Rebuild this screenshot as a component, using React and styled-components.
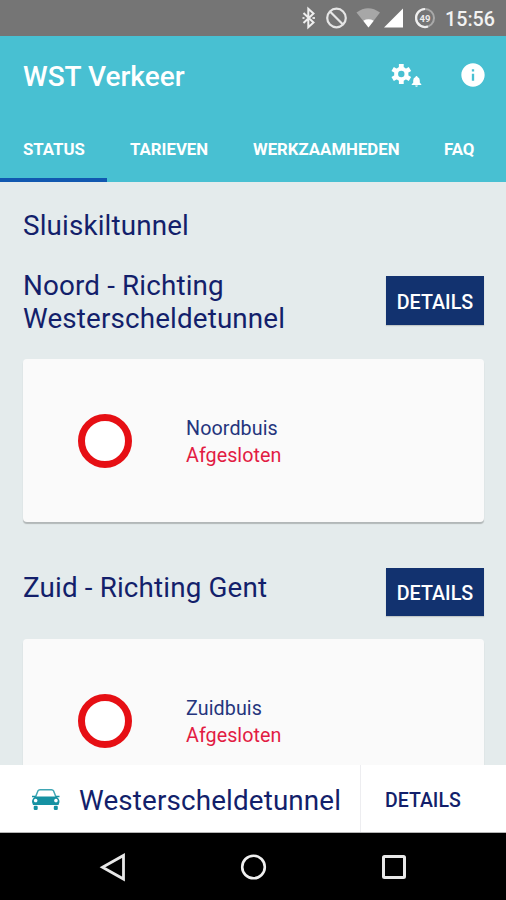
import React from "react";
import styled, { createGlobalStyle } from "styled-components";
import { MdInfo } from "react-icons/md";

const GlobalStyle = createGlobalStyle`
  *, *::before, *::after { box-sizing: border-box; }
  body { margin: 0; background: #e4ebec; font-family: Roboto, sans-serif; }
  button { font: inherit; border: 0; padding: 0; background: none; color: inherit; }
`;

const Screen = styled.div`
  width: 506px;
  height: 900px;
  display: flex;
  flex-direction: column;
  overflow: hidden;
  background: #e4ebec;
  color: #131f6b;
`;

const StatusBar = styled.div`
  flex: 0 0 36px;
  height: 36px;
  display: flex;
  align-items: center;
  justify-content: flex-end;
  padding-right: 11px;
  background: #757575;
  color: #fff;
`;

const StatusIcons = styled.svg`
  width: 136px;
  height: 36px;
  flex: none;
`;

const Clock = styled.span`
  width: 50px;
  margin-left: 9px;
  font-size: 19.7px;
  font-weight: 500;
  line-height: 34px;
  padding-top: 3px;
  white-space: nowrap;
  color: #f2f2f2;
`;

const AppBar = styled.header`
  flex: 0 0 146px;
  height: 146px;
  display: flex;
  flex-direction: column;
  background: #48c0d2;
  color: #fff;
`;

const Toolbar = styled.div`
  height: 80px;
  display: flex;
  align-items: center;
  padding: 0 19px 0 23px;
`;

const AppTitle = styled.h1`
  flex: 1;
  margin: 0;
  padding-top: 1px;
  font-size: 28px;
  font-weight: 500;
  line-height: 36px;
`;

const SettingsButton = styled.button`
  display: flex;
  margin-right: 37px;
`;

const SettingsIcon = styled.svg`
  width: 34px;
  height: 28px;
`;

const InfoButton = styled.button`
  display: flex;
  margin-top: -2px;
`;

const Tabs = styled.nav`
  height: 66px;
  display: flex;
`;

const Tab = styled.button`
  flex: none;
  width: ${(p) => p.$width}px;
  text-align: left;
  padding: 4px 0 0 23px;
  font-size: 16.8px;
  font-weight: 700;
  white-space: nowrap;
  border-bottom: 4px solid ${(p) => (p.$active ? "#1158b0" : "transparent")};
`;

const Content = styled.main`
  flex: 1;
  min-height: 0;
  overflow: hidden;
  padding: 27px 22px 0 23px;
`;

const Heading = styled.h2`
  margin: ${(p) => p.$offset || 0}px 0 0;
  font-size: 27.8px;
  font-weight: 400;
  line-height: 33px;
  letter-spacing: 0.15px;
  white-space: nowrap;
`;

const Direction = styled.div`
  display: flex;
  justify-content: space-between;
  align-items: flex-start;
  height: ${(p) => p.$height}px;
  margin: ${(p) => p.$top}px 0 ${(p) => p.$bottom}px;
`;

const DetailsButton = styled.button`
  width: 98px;
  height: ${(p) => p.$height || 49}px;
  margin-top: ${(p) => p.$offset || 0}px;
  background: #12326f;
  color: #fff;
  font-size: 19.7px;
  font-weight: 500;
  padding-top: 3px;
  box-shadow: 0 1px 1px rgba(0, 0, 0, 0.15);
`;

const Card = styled.section`
  height: 163px;
  display: flex;
  align-items: center;
  border-radius: 4px;
  background: #fafafa;
  box-shadow: 0 2px 1px rgba(0, 0, 0, 0.22);
`;

const ClosedSign = styled.div`
  width: 54px;
  height: 54px;
  margin: 1px 54px 0 55px;
  border: 7px solid #e60f14;
  border-radius: 50%;
  background: #fff;
`;

const TubeText = styled.div`
  font-size: 19.7px;
  line-height: 27px;
  padding-top: 3px;
`;

const TubeName = styled.div`
  color: #25357d;
  letter-spacing: 0.1px;
`;

const TubeState = styled.div`
  color: #e21c43;
  letter-spacing: 0.05px;
`;

const BottomBar = styled.footer`
  flex: 0 0 68px;
  display: flex;
  background: #fff;
  border-bottom: 1px solid #b5b5b5;
`;

const BottomLabel = styled.div`
  width: 361px;
  display: flex;
  align-items: center;
  padding: 3px 0 0 31px;
  border-right: 1px solid #ededf0;
`;

const CarIcon = styled.svg`
  width: 30px;
  height: 24px;
  margin: -3px 18px 0 0;
`;

const BottomAction = styled.button`
  padding: 3px 0 0 24px;
  font-size: 19.5px;
  font-weight: 500;
`;

const NavBar = styled.div`
  flex: 0 0 67px;
  background: #000;
  display: flex;
  align-items: center;
  padding-left: 97px;
  gap: 108px;
  svg { width: 32px; height: 32px; flex: none; }
`;

function StatusDrawing() {
  return (
    <StatusIcons viewBox="300 0 136 36" fill="none">
      <path d="M303.500 13l10 9.500-5.200 4.800V8.700l5.200 4.800-10 9.500" stroke="#efefef" strokeWidth="2" />
      <path d="M302.500 18h2M312.500 18h2.500" stroke="#dedede" strokeWidth="2" />
      <circle cx="336.500" cy="18" r="9.300" stroke="#e6e6e6" strokeWidth="2.200" />
      <path d="M330 11.500l13 13" stroke="#e6e6e6" strokeWidth="2.200" />
      <path d="M356.500 12.500Q368 4 380 12.500L368.500 27.500z" fill="#a7a7a7" />
      <path d="M363.300 20.700Q368.500 18 373.700 20.700L368.500 27.500z" fill="#fff" />
      <path d="M403 8.500V27.500H384z" fill="#fff" />
      <circle cx="425" cy="18" r="9" stroke="#a9a9a9" strokeWidth="2" />
      <path d="M425 9A9 9 0 1 0 428 26.500" stroke="#efefef" strokeWidth="2.200" />
      <text x="425" y="21.500" textAnchor="middle" fontSize="9.500" fontWeight="700" fill="#ededed">49</text>
    </StatusIcons>
  );
}

function GearWithBell() {
  return (
    <SettingsIcon viewBox="0 0 34 28">
      <g transform="translate(1.3 0)" fill="none" stroke="currentColor">
        <circle cx="12" cy="12" r="5.200" strokeWidth="4" />
        <path
          d="M12 2V7M12 17V22M3.340 7L7.700 9.500M16.300 14.500L20.660 17M3.340 17L7.700 14.500M16.300 9.500L20.660 7"
          strokeWidth="4.800"
        />
      </g>
      <path
        d="M28.500 14q1 0 1 1.100 2.300.8 2.300 3.500v2.200l1.500 1.500v.7h-9.600v-.7l1.500-1.500v-2.200q0-2.700 2.300-3.500 0-1.100 1-1.100zM27.200 23.400h2.600q0 1.300-1.300 1.300t-1.300-1.300z"
        fill="currentColor"
      />
    </SettingsIcon>
  );
}

function Car() {
  return (
    <CarIcon viewBox="0 0 30 24">
      <path d="M4.500 10L7 3.800Q7.500 2.700 9 2.700H20.500Q22 2.700 22.500 3.800L25 10" fill="none" stroke="#3fa6b4" strokeWidth="1.500" />
      <path fillRule="evenodd" fill="#1591a2" d="M4.500 9.500H25Q28.500 11 28.500 15L27.500 18H2L1 15Q1 11 4.500 9.500zM4.600 11.700a1.800 1.800 0 1 0 .1 0zM24.900 11.700a1.800 1.800 0 1 0 .1 0z" />
      <path d="M1 9.500H4.500M25 9.500H28.500" stroke="#1591a2" strokeWidth="1.500" />
      <rect x="2.700" y="18.800" width="4" height="4.200" rx="1.200" fill="#1591a2" />
      <rect x="22.800" y="18.800" width="4" height="4.200" rx="1.200" fill="#1591a2" />
    </CarIcon>
  );
}

function TubeCard({ name }) {
  return (
    <Card>
      <ClosedSign />
      <TubeText>
        <TubeName>{name}</TubeName>
        <TubeState>Afgesloten</TubeState>
      </TubeText>
    </Card>
  );
}

export default function App() {
  return (
    <Screen>
      <GlobalStyle />
      <StatusBar>
        <StatusDrawing />
        <Clock>15:56</Clock>
      </StatusBar>
      <AppBar>
        <Toolbar>
          <AppTitle>WST Verkeer</AppTitle>
          <SettingsButton aria-label="Instellingen">
            <GearWithBell />
          </SettingsButton>
          <InfoButton aria-label="Informatie">
            <MdInfo size={28} />
          </InfoButton>
        </Toolbar>
        <Tabs>
          <Tab $width={107} $active>STATUS</Tab>
          <Tab $width={123}>TARIEVEN</Tab>
          <Tab $width={191}>WERKZAAMHEDEN</Tab>
          <Tab $width={85}>FAQ</Tab>
        </Tabs>
      </AppBar>
      <Content>
        <Heading>Sluiskiltunnel</Heading>
        <Direction $height={66} $top={27} $bottom={24}>
          <Heading as="h3">
            Noord - Richting
            <br />
            Westerscheldetunnel
          </Heading>
          <DetailsButton $offset={7}>DETAILS</DetailsButton>
        </Direction>
        <TubeCard name="Noordbuis" />
        <Direction $height={48} $top={46} $bottom={23}>
          <Heading as="h3" $offset={3}>Zuid - Richting Gent</Heading>
          <DetailsButton $height={48}>DETAILS</DetailsButton>
        </Direction>
        <TubeCard name="Zuidbuis" />
      </Content>
      <BottomBar>
        <BottomLabel>
          <Car />
          <Heading as="div">Westerscheldetunnel</Heading>
        </BottomLabel>
        <BottomAction>DETAILS</BottomAction>
      </BottomBar>
      <NavBar>
        <svg viewBox="0 0 32 32">
          <path d="M26.500 4.500V28L5.500 16.300z" fill="none" stroke="#e8e8e8" strokeWidth="2.800" />
        </svg>
        <svg viewBox="0 0 32 32">
          <circle cx="16.500" cy="16" r="11.300" fill="none" stroke="#f0f0f0" strokeWidth="2.600" />
        </svg>
        <svg viewBox="0 0 32 32">
          <rect x="6.500" y="5.500" width="21" height="21" rx="1" fill="none" stroke="#e8e8e8" strokeWidth="3" />
        </svg>
      </NavBar>
    </Screen>
  );
}
